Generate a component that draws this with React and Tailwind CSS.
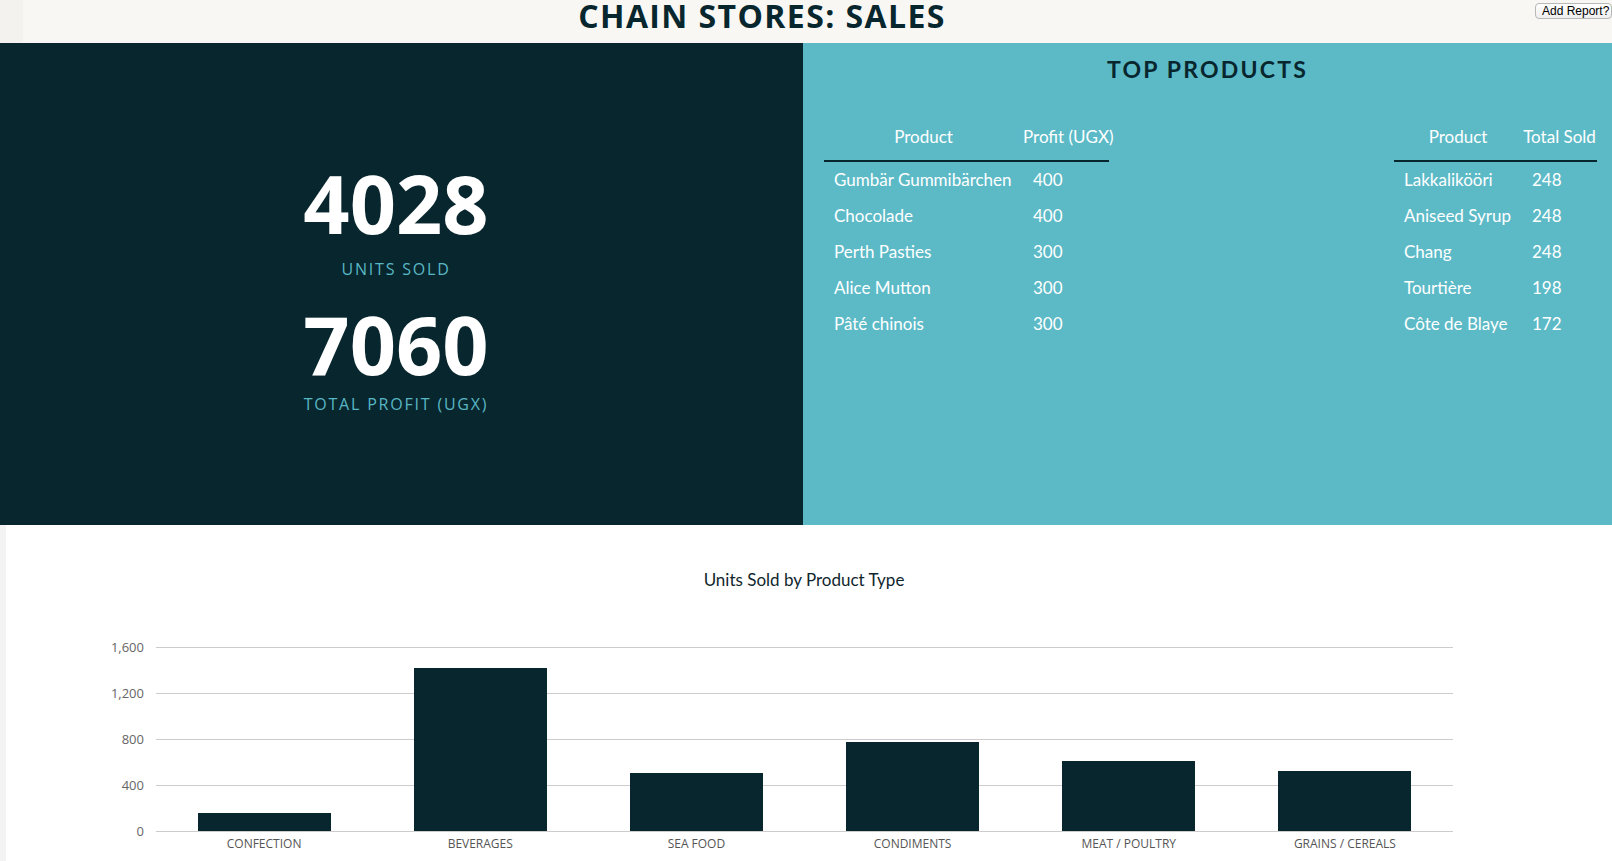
import React from "react";

const leftRows = [
  ["Gumbär Gummibärchen", "400"],
  ["Chocolade", "400"],
  ["Perth Pasties", "300"],
  ["Alice Mutton", "300"],
  ["Pâté chinois", "300"],
];

const rightRows = [
  ["Lakkalikööri", "248"],
  ["Aniseed Syrup", "248"],
  ["Chang", "248"],
  ["Tourtière", "198"],
  ["Côte de Blaye", "172"],
];

const bars = [
  { label: "CONFECTION", value: 157 },
  { label: "BEVERAGES", value: 1417 },
  { label: "SEA FOOD", value: 504 },
  { label: "CONDIMENTS", value: 774 },
  { label: "MEAT / POULTRY", value: 609 },
  { label: "GRAINS / CEREALS", value: 522 },
];

const ticks = [
  { label: "1,600", top: "top-0" },
  { label: "1,200", top: "top-[46px]" },
  { label: "800", top: "top-[92px]" },
  { label: "400", top: "top-[138px]" },
  { label: "0", top: "top-[184px]" },
];

function ProductTable({ headA, headB, rows, colA, colB }) {
  return (
    <div className="text-white text-[17px] leading-[20px]" style={{ fontFamily: "Lato, 'Open Sans', sans-serif" }}>
      <div className="flex items-center h-[48px] border-b-2 border-[#08262e]">
        <div className={`${colA} text-center`}>{headA}</div>
        <div className={`${colB} text-center whitespace-nowrap`}>{headB}</div>
      </div>
      {rows.map(([a, b]) => (
        <div key={a} className="flex items-center h-[36px]">
          <div className={`${colA} px-[10px] whitespace-nowrap`}>{a}</div>
          <div className={`${colB} px-[10px]`}>{b}</div>
        </div>
      ))}
    </div>
  );
}

export default function App() {
  return (
    <div className="w-[1612px] h-[861px] overflow-hidden bg-white" style={{ fontFamily: "'Open Sans', sans-serif" }}>
      {/* Header */}
      <div className="flex items-start h-[43px] bg-[#f8f7f3]">
        <div className="w-[23px] h-full bg-[#f3f2ee] shrink-0" />
        <div className="flex-1 text-center text-[32px] leading-[34px] font-bold tracking-[1.4px] text-[#08262e] -ml-[23px] -mt-[1px]">
          CHAIN STORES: SALES
        </div>
        <div className="shrink-0 ml-[11px] pt-[3px]">
          <button
            className="block w-[77px] h-[16px] pl-[6px] text-left text-[12px] leading-[14px] text-black border border-[#b8b8b8] rounded-[4px] bg-gradient-to-b from-white to-[#eeeeee] whitespace-nowrap overflow-hidden"
            style={{ fontFamily: "'Liberation Sans', Arial, sans-serif" }}
          >
            Add Report?
          </button>
        </div>
      </div>

      {/* Panels */}
      <div className="flex h-[482px]">
        <div className="w-[803px] bg-[#08262e] flex flex-col items-center pt-[119px] pr-[11px]">
          <div className="text-white font-bold text-[81px] leading-[81px]">4028</div>
          <div className="mt-[18px] text-[16px] leading-[17px] tracking-[1.8px] text-[#58b7c4]">UNITS SOLD</div>
          <div className="mt-[25px] text-white font-bold text-[81px] leading-[81px]">7060</div>
          <div className="mt-[12px] text-[16px] leading-[17px] tracking-[1.8px] text-[#58b7c4]">TOTAL PROFIT (UGX)</div>
        </div>
        <div className="flex-1 bg-[#5cbac7] pt-[15px]">
          <div
            className="text-center text-[23px] leading-[23px] font-bold tracking-[2.2px] text-[#08262e]"
            style={{ fontFamily: "Lato, 'Open Sans', sans-serif" }}
          >
            TOP PRODUCTS
          </div>
          <div className="flex justify-between mt-[33px] pl-[21px] pr-[15px]">
            <ProductTable headA="Product" headB="Profit (UGX)" rows={leftRows} colA="w-[199px]" colB="w-[86px]" />
            <ProductTable headA="Product" headB="Total Sold" rows={rightRows} colA="w-[128px]" colB="w-[75px]" />
          </div>
        </div>
      </div>

      {/* Chart */}
      <div className="flex h-[336px]">
        <div className="w-[6px] shrink-0 bg-[#f3f3f3]" />
        <div className="flex-1 pt-[45px]">
          <div
            className="pr-[10px] text-center text-[17px] leading-[20px] text-[#10262d]"
            style={{ fontFamily: "Lato, 'Open Sans', sans-serif" }}
          >
            Units Sold by Product Type
          </div>
          <div className="flex mt-[57px]">
            <div className="w-[150px] shrink-0 relative h-[185px]">
              {ticks.map((t) => (
                <div
                  key={t.label}
                  className={`absolute right-[12px] ${t.top} -translate-y-1/2 text-[13px] leading-[16px] text-[#666666]`}
                >
                  {t.label}
                </div>
              ))}
            </div>
            <div className="w-[1297px] shrink-0">
              <div className="relative h-[185px]">
                {ticks.map((t) => (
                  <div key={t.label} className={`absolute left-0 right-0 ${t.top} h-px bg-[#cccccc]`} />
                ))}
                <div className="absolute left-0 right-0 top-0 h-[184px] grid grid-cols-6 items-end">
                  {bars.map((b) => (
                    <div key={b.label} className="flex justify-center">
                      <div className="w-[133px] bg-[#08262e]" style={{ height: `${Math.round((b.value * 184) / 1600)}px` }} />
                    </div>
                  ))}
                </div>
              </div>
              <div className="grid grid-cols-6 mt-[4px]">
                {bars.map((b) => (
                  <div key={b.label} className="text-center text-[12px] leading-[16px] text-[#555555]">
                    {b.label}
                  </div>
                ))}
              </div>
            </div>
          </div>
        </div>
      </div>
    </div>
  );
}
